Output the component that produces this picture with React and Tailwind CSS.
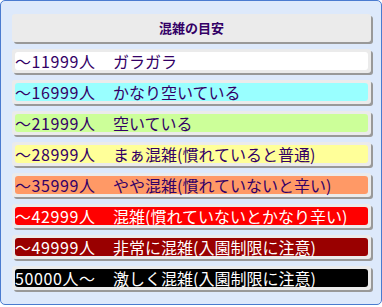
import React from "react";

const rows = [
	{ range: "〜11999人", label: "ガラガラ", bar: "bg-white", text: "text-[#330066]" },
	{ range: "〜16999人", label: "かなり空いている", bar: "bg-[#99ffff]", text: "text-[#330066]" },
	{ range: "〜21999人", label: "空いている", bar: "bg-[#ccff99]", text: "text-[#330066]" },
	{ range: "〜28999人", label: "まぁ混雑(慣れていると普通)", bar: "bg-[#ffff99]", text: "text-[#330066]" },
	{ range: "〜35999人", label: "やや混雑(慣れていないと辛い)", bar: "bg-[#ff9966]", text: "text-[#330066]" },
	{ range: "〜42999人", label: "混雑(慣れていないとかなり辛い)", bar: "bg-[#ff0000]", text: "text-white" },
	{ range: "〜49999人", label: "非常に混雑(入園制限に注意)", bar: "bg-[#990000]", text: "text-white" },
	{ range: "50000人〜", label: "激しく混雑(入園制限に注意)", bar: "bg-black", text: "text-white" },
];

const App = () => {
	return (
		<div className="w-[382px] h-[307px] bg-white font-['Noto_Sans_CJK_JP',sans-serif]">
			<div className="w-[382px] h-[305px] border border-[#4a7bd0] rounded-[5px] bg-[#dde9fb] pt-[13px] pl-[11px] pr-[9px]">
				<div className="h-[28px] w-[359px] rounded-[3px] bg-[#ebebeb] shadow-[2px_2px_0_#999] flex items-center justify-center text-[13px] font-bold text-[#330066] mb-[7px]">
					混雑の目安
				</div>
				<div className="flex flex-col gap-[7px]">
					{rows.map((r) => (
						<div
							key={r.range}
							className="h-[24px] w-[359px] rounded-[3px] bg-[#ebebeb] shadow-[2px_2px_0_#999] p-[3px]"
						>
							<div className={`h-[18px] rounded-[3px] ${r.bar} ${r.text} flex items-center text-[16px] leading-[18px] whitespace-nowrap`}>
								<span className="w-[98px] shrink-0 tracking-[0.6px]">{r.range}</span>
								<span>{r.label}</span>
							</div>
						</div>
					))}
				</div>
			</div>
		</div>
	);
};

export default App;
